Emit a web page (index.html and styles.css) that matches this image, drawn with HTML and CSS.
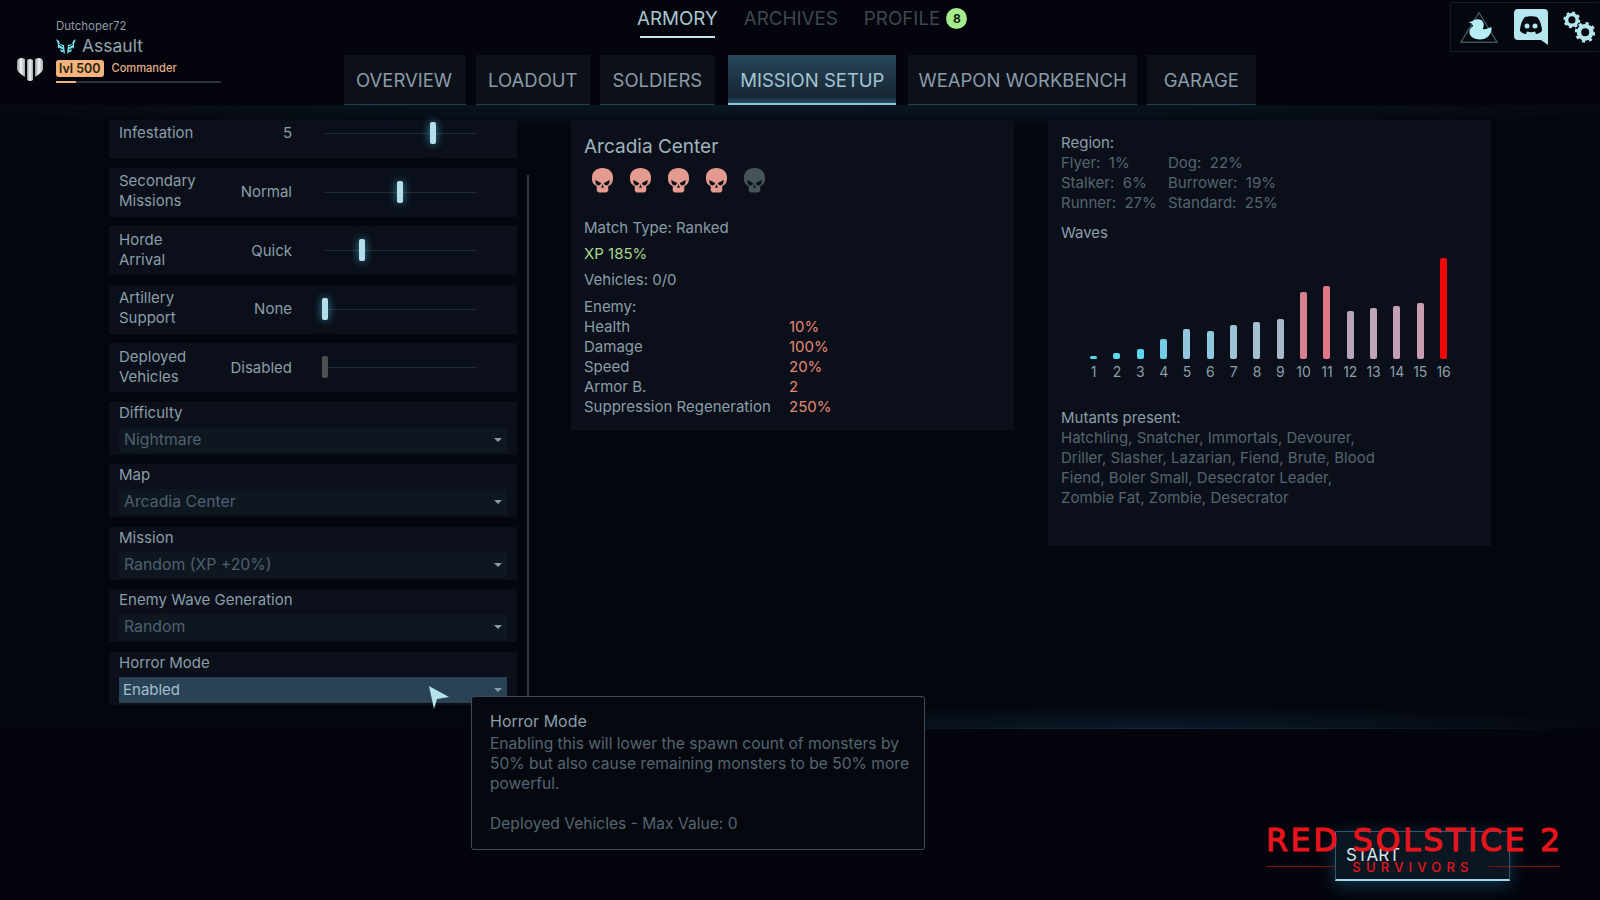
FILE: index.html
```html
<!DOCTYPE html>
<html lang="en">
<head>
    <meta charset="UTF-8">
    <title>Red Solstice 2 - Mission Setup</title>
    <link rel="stylesheet" href="styles.css">
</head>
<body>
    <header class="header">
        <div class="profile">
            <svg class="rank-icon" viewBox="0 0 26 25">
                <defs>
                    <linearGradient id="silver" x1="0" x2="1" y1="0" y2="0">
                        <stop offset="0" stop-color="#8f9599"/>
                        <stop offset="0.5" stop-color="#f2f3f4"/>
                        <stop offset="1" stop-color="#a4a9ad"/>
                    </linearGradient>
                </defs>
                <path d="M2 1.500Q0 2 0 5V12Q0 15 8 20V2Q4 .5 2 1.500Z" fill="url(#silver)"/>
                <path d="M24 1.500Q26 2 26 5V12Q26 15 18 20V2Q22 .5 24 1.500Z" fill="url(#silver)"/>
                <path d="M10 3Q13 1 16 3V23Q13 25 10 23Z" fill="url(#silver)"/>
            </svg>
            <div class="profile-info">
                <div class="player-name">Dutchoper72</div>
                <div class="player-class">
                    <svg class="class-icon" viewBox="0 0 20 15">
                        <path d="M0 0 3 2 4 5 8 6 9 15 7 13 5 13 4 10 2 9 2 5Z" fill="#6fe0ee"/>
                        <path d="M20 0 17 2 16 5 12 6 11 15 13 13 15 13 16 10 18 9 18 5Z" fill="#6fe0ee"/>
                        <path d="M3 5 7 8M3 9 7 11M17 5 13 8M17 9 13 11" stroke="#05070f" stroke-width="1"/>
                    </svg>
                    Assault
                </div>
                <div class="player-level">
                    <span class="level-badge">lvl 500</span>
                    <span class="level-title">Commander</span>
                </div>
                <div class="xp-bar"><div class="xp-fill"></div></div>
            </div>
        </div>

        <div class="nav">
            <div class="top-nav">
                <span class="top-link active">ARMORY</span>
                <span class="top-link">ARCHIVES</span>
                <span class="top-link">PROFILE</span>
                <span class="badge">8</span>
            </div>
            <div class="tabs">
                <div class="tab tab-overview">OVERVIEW</div>
                <div class="tab">LOADOUT</div>
                <div class="tab tab-soldiers">SOLDIERS</div>
                <div class="tab active">MISSION SETUP</div>
                <div class="tab tab-workbench">WEAPON WORKBENCH</div>
                <div class="tab tab-garage">GARAGE</div>
            </div>
        </div>

        <div class="tools">
            <svg class="tool duck" viewBox="0 0 44 36">
                <path d="M22 3 41 34H3Z" fill="none" stroke="#3c5258" stroke-width="1.5"/>
                <path d="M21 10c4 0 6 3 6 6 0 2-1 3-1 4 3 1 6-1 9-2 1 7-4 13-12 13-7 0-11-3-11-8 0-3 2-5 4-6l-2-3-3-1 4-1c1-1 3-2 6-2Z" fill="#b5eef5"/>
            </svg>
            <svg class="tool" viewBox="0 0 36 36">
                <path d="M4 0H30Q34 0 34 4V36L27 31H4Q0 31 0 27V4Q0 0 4 0Z" fill="#b5e6ee"/>
                <path d="M11 8C14 7 20 7 23 8 26 11 28 17 28 22 26 24 24 25 22 25L21 22.500C18 23.500 16 23.500 13 22.500L12 25C10 25 8 24 6 22 6 17 8 11 11 8Z" fill="#06090f"/>
                <circle cx="13" cy="17" r="2.500" fill="#b5e6ee"/>
                <circle cx="21" cy="17" r="2.500" fill="#b5e6ee"/>
            </svg>
            <svg class="tool gears" viewBox="0 0 36 36">
                <circle cx="10" cy="10" r="6" fill="none" stroke="#b5e6ee" stroke-width="4"/>
                <circle cx="10" cy="10" r="8" fill="none" stroke="#b5e6ee" stroke-width="3" stroke-dasharray="3 3.300"/>
                <circle cx="25" cy="24" r="7" fill="none" stroke="#b5e6ee" stroke-width="5"/>
                <circle cx="25" cy="24" r="10" fill="none" stroke="#b5e6ee" stroke-width="3.500" stroke-dasharray="3.500 4.350"/>
            </svg>
        </div>
    </header>

    <main class="content">
        <section class="settings">
            <div class="row slider-row row-first">
                <span class="row-label">Infestation</span>
                <span class="row-value">5</span>
                <div class="slider"><div class="thumb" style="left: 105px"></div></div>
            </div>
            <div class="row slider-row">
                <span class="row-label">Secondary Missions</span>
                <span class="row-value">Normal</span>
                <div class="slider"><div class="thumb" style="left: 72px"></div></div>
            </div>
            <div class="row slider-row">
                <span class="row-label">Horde Arrival</span>
                <span class="row-value">Quick</span>
                <div class="slider"><div class="thumb" style="left: 34px"></div></div>
            </div>
            <div class="row slider-row">
                <span class="row-label">Artillery Support</span>
                <span class="row-value">None</span>
                <div class="slider"><div class="thumb" style="left: -3px"></div></div>
            </div>
            <div class="row slider-row disabled">
                <span class="row-label">Deployed Vehicles</span>
                <span class="row-value">Disabled</span>
                <div class="slider"><div class="thumb" style="left: -3px"></div></div>
            </div>
            <div class="row select-row">
                <div class="select-label">Difficulty</div>
                <div class="select">Nightmare<span class="caret"></span></div>
            </div>
            <div class="row select-row">
                <div class="select-label">Map</div>
                <div class="select">Arcadia Center<span class="caret"></span></div>
            </div>
            <div class="row select-row">
                <div class="select-label">Mission</div>
                <div class="select">Random (XP +20%)<span class="caret"></span></div>
            </div>
            <div class="row select-row">
                <div class="select-label">Enemy Wave Generation</div>
                <div class="select">Random<span class="caret"></span></div>
            </div>
            <div class="row select-row">
                <div class="select-label">Horror Mode</div>
                <div class="select hovered">Enabled<span class="caret"></span></div>
            </div>
        </section>
        <div class="scrollbar"></div>

        <section class="panel mission">
            <h2 class="map-name">Arcadia Center</h2>
            <div class="skulls">
                <svg class="skull" viewBox="0 0 24 26"><use href="#skull"/></svg>
                <svg class="skull" viewBox="0 0 24 26"><use href="#skull"/></svg>
                <svg class="skull" viewBox="0 0 24 26"><use href="#skull"/></svg>
                <svg class="skull" viewBox="0 0 24 26"><use href="#skull"/></svg>
                <svg class="skull off" viewBox="0 0 24 26"><use href="#skull"/></svg>
            </div>
            <p class="line">Match Type: Ranked</p>
            <p class="line xp">XP 185%</p>
            <p class="line">Vehicles: 0/0</p>
            <div class="enemy">
                <div>Enemy:</div>
                <div class="stat"><span>Health</span><span class="stat-val">10%</span></div>
                <div class="stat"><span>Damage</span><span class="stat-val">100%</span></div>
                <div class="stat"><span>Speed</span><span class="stat-val">20%</span></div>
                <div class="stat"><span>Armor B.</span><span class="stat-val">2</span></div>
                <div class="stat"><span>Suppression Regeneration</span><span class="stat-val">250%</span></div>
            </div>
        </section>

        <section class="panel region">
            <div>Region:</div>
            <div class="region-grid">
                <span>Flyer:&nbsp; 1%</span><span>Dog:&nbsp; 22%</span>
                <span>Stalker:&nbsp; 6%</span><span>Burrower:&nbsp; 19%</span>
                <span>Runner:&nbsp; 27%</span><span>Standard:&nbsp; 25%</span>
            </div>
            <div class="waves-title">Waves</div>
            <div class="chart">
                <div class="wave"><div class="bar" style="height: 3px; background: #5cd6e6"></div>1</div>
                <div class="wave"><div class="bar" style="height: 6px; background: #5cdcf0"></div>2</div>
                <div class="wave"><div class="bar" style="height: 10px; background: #5cd8ee"></div>3</div>
                <div class="wave"><div class="bar" style="height: 20px; background: #74cbe6"></div>4</div>
                <div class="wave"><div class="bar" style="height: 30px; background: #90c6de"></div>5</div>
                <div class="wave"><div class="bar" style="height: 28px; background: #8ec8de"></div>6</div>
                <div class="wave"><div class="bar" style="height: 34px; background: #9cc2d6"></div>7</div>
                <div class="wave"><div class="bar" style="height: 37px; background: #a4bed2"></div>8</div>
                <div class="wave"><div class="bar" style="height: 40px; background: #a8b8ca"></div>9</div>
                <div class="wave"><div class="bar" style="height: 67px; background: #d8808f"></div>10</div>
                <div class="wave"><div class="bar" style="height: 73px; background: #e07888"></div>11</div>
                <div class="wave"><div class="bar" style="height: 48px; background: #b8a6b8"></div>12</div>
                <div class="wave"><div class="bar" style="height: 51px; background: #bfa4b8"></div>13</div>
                <div class="wave"><div class="bar" style="height: 53px; background: #c4a0b6"></div>14</div>
                <div class="wave"><div class="bar" style="height: 56px; background: #c89eb2"></div>15</div>
                <div class="wave"><div class="bar" style="height: 101px; background: #ee0a0a"></div>16</div>
            </div>
            <div class="mutants-title">Mutants present:</div>
            <div class="mutants">Hatchling, Snatcher, Immortals, Devourer, Driller, Slasher, Lazarian, Fiend, Brute, Blood Fiend, Boler Small, Desecrator Leader, Zombie Fat, Zombie, Desecrator</div>
        </section>
    </main>

    <div class="tooltip">
        <div class="tooltip-title">Horror Mode</div>
        <div>Enabling this will lower the spawn count of monsters by 50% but also cause remaining monsters to be 50% more powerful.</div>
        <div class="tooltip-note">Deployed Vehicles - Max Value: 0</div>
    </div>

    <svg class="cursor" viewBox="0 0 20 24">
        <path d="M0 0 20 11 8 13 5 23Z" fill="#b4e3ea"/>
    </svg>

    <div class="start-button">START</div>
    <div class="logo">
        <div class="logo-title">RED SOLSTICE 2</div>
        <div class="logo-sub">SURVIVORS</div>
    </div>

    <svg class="defs" width="0" height="0">
        <symbol id="skull" viewBox="0 0 24 26">
            <path fill-rule="evenodd" d="M12 0C18.500 0 23 4 23 10 23 13 22.500 15 21 17L18 19V24L16 25.500H8L6 24V19L3 17C1.500 15 1 13 1 10 1 4 5.500 0 12 0ZM4.500 12.500 10.500 15.500C10.500 17.500 8.500 18.500 7 18 5 17 4.500 15 4.500 12.500ZM19.500 12.500 13.500 15.500C13.500 17.500 15.500 18.500 17 18 19 17 19.500 15 19.500 12.500ZM12 17 10.500 20.500H13.500Z"/>
        </symbol>
    </svg>
</body>
</html>
```

FILE: styles.css
```css
body {
    margin: 0;
    width: 1600px;
    height: 900px;
    overflow: hidden;
    position: relative;
    font-family: Inter, "Noto Sans", sans-serif;
    font-size: 15px;
    line-height: 20px;
    color: #8b9ea9;
    background: #03040c;
}

.header {
    display: grid;
    grid-template-columns: 344px 912px 1fr;
    height: 105px;
    box-sizing: border-box;
}

.profile {
    display: flex;
    align-items: flex-start;
    padding: 18px 0 0 17px;
}

.rank-icon {
    width: 26px;
    height: 25px;
    margin-top: 39px;
    margin-right: 13px;
}

.profile-info {
    width: 165px;
}

.player-name {
    font-size: 11.500px;
    line-height: 16px;
    color: #8d9aa3;
}

.player-class {
    display: flex;
    align-items: center;
    gap: 6px;
    font-size: 17.500px;
    line-height: 24px;
    color: #93a5ae;
}

.class-icon {
    width: 20px;
    height: 15px;
}

.player-level {
    display: flex;
    align-items: center;
    gap: 8px;
}

.level-badge {
    padding: 0 3px;
    font-size: 12.500px;
    line-height: 17px;
    font-weight: 600;
    color: #2a1d10;
    background: #f2b47c;
    border-radius: 3px;
}

.level-title {
    font-size: 11.100px;
    font-weight: 500;
    color: #e2b084;
}

.xp-bar {
    height: 2px;
    margin-top: 3px;
    background: #2e3236;
}

.xp-fill {
    width: 20px;
    height: 2px;
    background: #eab47c;
}

.top-nav {
    display: flex;
    align-items: center;
    height: 37px;
    margin-left: 293px;
    font-size: 18.800px;
    color: #3e474f;
}

.top-link {
    margin-right: 26px;
}

.top-link:nth-child(3) {
    margin-right: 6px;
}

.top-link.active {
    color: #a9c6cf;
    position: relative;
}

.top-link.active::after {
    content: "";
    position: absolute;
    left: 3px;
    right: 3px;
    bottom: -9px;
    height: 2px;
    background: #c8e4ea;
}

.badge {
    width: 21px;
    height: 21px;
    font-size: 12px;
    line-height: 21px;
    font-weight: 700;
    text-align: center;
    color: #10200c;
    background: #a5ec8e;
    border-radius: 50%;
}

.tabs {
    display: flex;
    gap: 10px;
    margin-top: 18px;
}

.tab {
    box-sizing: border-box;
    height: 50px;
    padding: 0 12px;
    font-size: 18.500px;
    line-height: 50px;
    white-space: nowrap;
    color: #8a9ca8;
    background: #0b1019;
    border-bottom: 1px solid #26404f;
}

.tab-overview {
    padding-right: 14px;
}

.tab-soldiers {
    padding: 0 13px;
}

.tab-workbench {
    padding: 0 10px;
}

.tab-garage {
    padding: 0 17px;
}

.tab.active {
    margin: 0 2px 0 3px;
    color: #a6c5d2;
    background: linear-gradient(#29475a, #152634 85%, #2c4a5c);
    border-bottom: 2px solid #86c9e0;
}

.tools {
    display: flex;
    align-items: center;
    justify-content: space-between;
    align-self: start;
    box-sizing: border-box;
    width: 150px;
    height: 50px;
    margin: 2px 0 0 194px;
    padding: 0 5px 0 7px;
    background: #05070f;
    border: 1px solid #161c24;
    border-radius: 2px;
    border-right: none;
}

.tool {
    width: 36px;
    height: 36px;
}

.tool.duck {
    width: 42px;
}

.tool.gears {
    width: 32px;
}

.content {
    display: flex;
    align-items: flex-start;
    height: 624px;
    padding: 15px 0 0 109px;
    background:
        linear-gradient(90deg, transparent 55%, #14293a 72%, transparent 97%) bottom / 100% 1px no-repeat,
        radial-gradient(ellipse 60% 24px at 50% 0, #0a1824, transparent),
        radial-gradient(ellipse 30% 24px at 72% 100%, #0a1a28, transparent),
        #04060e;
    box-sizing: border-box;
}

.settings {
    display: flex;
    flex-direction: column;
    gap: 9.500px;
    width: 408px;
}

.row {
    background: #0a0f19;
    box-sizing: border-box;
    padding: 0 10px;
}

.slider-row {
    display: flex;
    align-items: center;
    height: 49px;
}

.row-first {
    height: 38px;
    padding-bottom: 12px;
}

.row-label {
    width: 85px;
    margin-top: -2px;
}

.row-first .row-label {
    margin-top: 0;
}

.row-value {
    width: 88px;
    text-align: right;
}

.slider {
    position: relative;
    width: 152px;
    height: 1px;
    margin-left: 33px;
    background: #1c2e3a;
}

.thumb {
    position: absolute;
    top: -11px;
    width: 6px;
    height: 22px;
    background: #b4dfea;
    border-radius: 2px;
    box-shadow: 0 0 9px #3f93b4;
}

.disabled .thumb {
    background: #4a4f52;
    box-shadow: none;
}

.select-row {
    height: 53px;
    padding-top: 1px;
}

.select-label {
    height: 24px;
    line-height: 20px;
}

.select {
    display: flex;
    align-items: center;
    justify-content: space-between;
    height: 26px;
    padding: 0 5px;
    font-size: 15.800px;
    color: #4f6170;
    background: #0e1620;
}

.select.hovered {
    padding-left: 4px;
    font-size: 15px;
    color: #a2bfcc;
    background: #2a4256;
}

.caret {
    width: 0;
    height: 0;
    border-left: 4px solid transparent;
    border-right: 4px solid transparent;
    border-top: 4px solid #8a9ca8;
}

.scrollbar {
    width: 2px;
    height: 530px;
    margin: 55px 42px 0 10px;
    background: #2c3a44;
}

.panel {
    box-sizing: border-box;
    background: #0a0f19;
}

.mission {
    width: 443px;
    height: 310px;
    padding: 14px 0 0 13px;
}

.map-name {
    margin: 0;
    font-size: 19px;
    line-height: 26px;
    font-weight: 400;
    color: #a0b4bd;
}

.skulls {
    display: flex;
    gap: 15px;
    margin: 8px 0 0 7px;
}

.skull {
    width: 23px;
    height: 25px;
    fill: #e59a90;
}

.skull.off {
    fill: #46545a;
}

.line {
    margin: 0;
    height: 26px;
    line-height: 26px;
}

.skulls + .line {
    margin-top: 22px;
}

.xp {
    color: #a8d98c;
}

.enemy {
    margin-top: 4px;
}

.stat {
    display: grid;
    grid-template-columns: 205px auto;
}

.stat-val {
    color: #e58a72;
}

.region {
    width: 443px;
    height: 426px;
    margin-left: 34px;
    padding: 13px 13px 0 13px;
}

.region-grid {
    display: grid;
    grid-template-columns: 107px auto;
    color: #55656f;
}

.waves-title {
    margin-top: 10px;
}

.chart {
    display: flex;
    height: 134px;
    margin-top: 5px;
    padding-left: 21px;
    align-items: flex-end;
}

.wave {
    display: flex;
    flex-direction: column;
    align-items: center;
    gap: 3px;
    width: 23.330px;
    font-size: 14px;
}

.bar {
    width: 7px;
    border-radius: 2px;
}

.mutants-title {
    margin-top: 26px;
}

.mutants {
    width: 320px;
    color: #55656f;
}

.tooltip {
    position: absolute;
    left: 471px;
    top: 696px;
    box-sizing: border-box;
    width: 454px;
    height: 154px;
    padding: 13px 8px 13px 18px;
    font-size: 15.600px;
    background: #05080f;
    border: 1px solid #3d4c56;
    border-radius: 3px;
    color: #55656f;
}

.tooltip-title {
    margin-bottom: 2px;
    font-size: 16px;
    line-height: 22px;
    color: #8b9ea9;
}

.tooltip-note {
    margin-top: 20px;
}

.cursor {
    position: absolute;
    left: 429px;
    top: 686px;
    width: 20px;
    height: 24px;
}

.start-button {
    position: absolute;
    left: 1335px;
    top: 831px;
    box-sizing: border-box;
    width: 175px;
    height: 50px;
    padding: 12px 10px;
    font-size: 17px;
    line-height: 22px;
    color: #d8e4ea;
    background: #0a1722;
    border: 1px solid #2c5a72;
    border-bottom: 2px solid #a5d8e6;
    box-shadow: 0 4px 18px #10384e;
}

.logo {
    position: absolute;
    left: 1266px;
    top: 822px;
    width: 294px;
    text-align: center;
    color: #e8141c;
    background: linear-gradient(#7a1014, #7a1014) left 44px / 69px 1px no-repeat, linear-gradient(#7a1014, #7a1014) right 44px / 71px 1px no-repeat;
}

.logo-title {
    font-family: "DejaVu Sans", sans-serif;
    font-size: 31.500px;
    line-height: 36px;
    letter-spacing: 2.700px;
    white-space: nowrap;
    -webkit-text-stroke: 1.100px #e8141c;
}

.logo-sub {
    margin-top: 2px;
    font-size: 13px;
    line-height: 14px;
    font-weight: 500;
    letter-spacing: 5.200px;
}

.defs {
    position: absolute;
}
```
